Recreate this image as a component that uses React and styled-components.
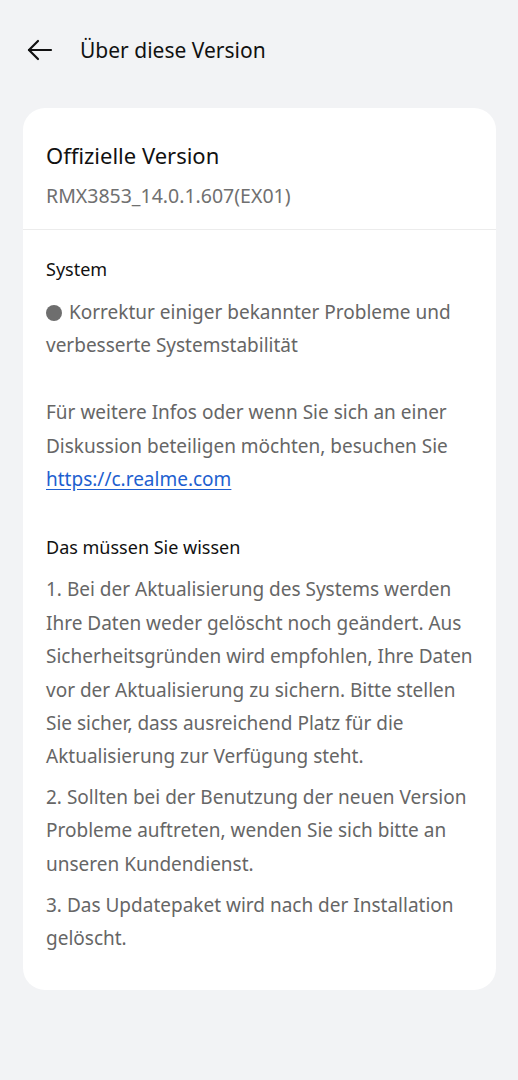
import React from 'react';
import styled, { createGlobalStyle } from 'styled-components';

const GlobalStyle = createGlobalStyle`
  html, body {
    margin: 0;
    padding: 0;
    background: #f2f3f5;
  }
  body {
    font-family: "Noto Sans", "Open Sans", sans-serif;
    -webkit-font-smoothing: antialiased;
  }
`;

const Page = styled.div`
  min-height: 1080px;
  background: #f2f3f5;
  padding-bottom: 40px;
`;

const Header = styled.div`
  height: 100px;
  display: flex;
  align-items: center;
  padding-left: 26px;
  gap: 26px;
`;

const BackButton = styled.button`
  border: 0;
  background: none;
  padding: 0;
  width: 28px;
  height: 28px;
  display: flex;
  align-items: center;
  justify-content: center;
  color: #111;
`;

const Title = styled.h1`
  margin: 0;
  font-size: 21px;
  font-weight: 400;
  color: #111;
  line-height: 30px;
`;

const Card = styled.div`
  margin: 8px 22px 0 23px;
  background: #fff;
  border-radius: 22px;
  overflow: hidden;
`;

const Top = styled.div`
  padding: 32px 23px 19px;
`;

const VersionName = styled.div`
  font-size: 22px;
  line-height: 30px;
  color: #111;
`;

const VersionCode = styled.div`
  margin-top: 12px;
  font-size: 19.5px;
  line-height: 28px;
  color: #707070;
`;

const Divider = styled.div`
  height: 1px;
  background: #ececec;
`;

const Body = styled.div`
  padding: 25px 23px 34px;
`;

const Heading = styled.div`
  font-size: 18px;
  line-height: 28px;
  color: #111;
  margin-top: ${p => p.$gap || 0}px;
`;

const Text = styled.p`
  margin: ${p => p.$gap || 0}px 0 0;
  font-size: 19px;
  line-height: 33.4px;
  color: #666;
`;

const Dot = styled.span`
  display: inline-block;
  width: 16px;
  height: 16px;
  border-radius: 50%;
  background: #6e6e6e;
  margin-right: 7px;
  vertical-align: -2px;
`;

const Link = styled.a`
  color: #1e5fd0;
  text-decoration: underline;
  text-underline-offset: 3px;
`;

const ArrowLeft = () => (
  <svg width="28" height="28" viewBox="0 0 28 28" fill="none" stroke="currentColor" strokeWidth="2.2" strokeLinecap="round" strokeLinejoin="round">
    <path d="M3 14h22" />
    <path d="M12 5l-9 9 9 9" />
  </svg>
);

export default function App() {
  return (
    <Page>
      <GlobalStyle />
      <Header>
        <BackButton aria-label="Zurück"><ArrowLeft /></BackButton>
        <Title>Über diese Version</Title>
      </Header>
      <Card>
        <Top>
          <VersionName>Offizielle Version</VersionName>
          <VersionCode>RMX3853_14.0.1.607(EX01)</VersionCode>
        </Top>
        <Divider />
        <Body>
          <Heading>System</Heading>
          <Text $gap={13}>
            <Dot />Korrektur einiger bekannter Probleme und verbesserte Systemstabilität
          </Text>
          <Text $gap={33.4}>
            Für weitere Infos oder wenn Sie sich an einer Diskussion beteiligen möchten, besuchen Sie{' '}
            <Link href="#">https://c.realme.com</Link>
          </Text>
          <Heading $gap={37}>Das müssen Sie wissen</Heading>
          <Text $gap={12}>
            1. Bei der Aktualisierung des Systems werden Ihre Daten weder gelöscht noch geändert. Aus Sicherheitsgründen wird empfohlen, Ihre Daten vor der Aktualisierung zu sichern. Bitte stellen Sie sicher, dass ausreichend Platz für die Aktualisierung zur Verfügung steht.
          </Text>
          <Text $gap={7}>
            2. Sollten bei der Benutzung der neuen Version Probleme auftreten, wenden Sie sich bitte an unseren Kundendienst.
          </Text>
          <Text $gap={8}>
            3. Das Updatepaket wird nach der Installation gelöscht.
          </Text>
        </Body>
      </Card>
    </Page>
  );
}
